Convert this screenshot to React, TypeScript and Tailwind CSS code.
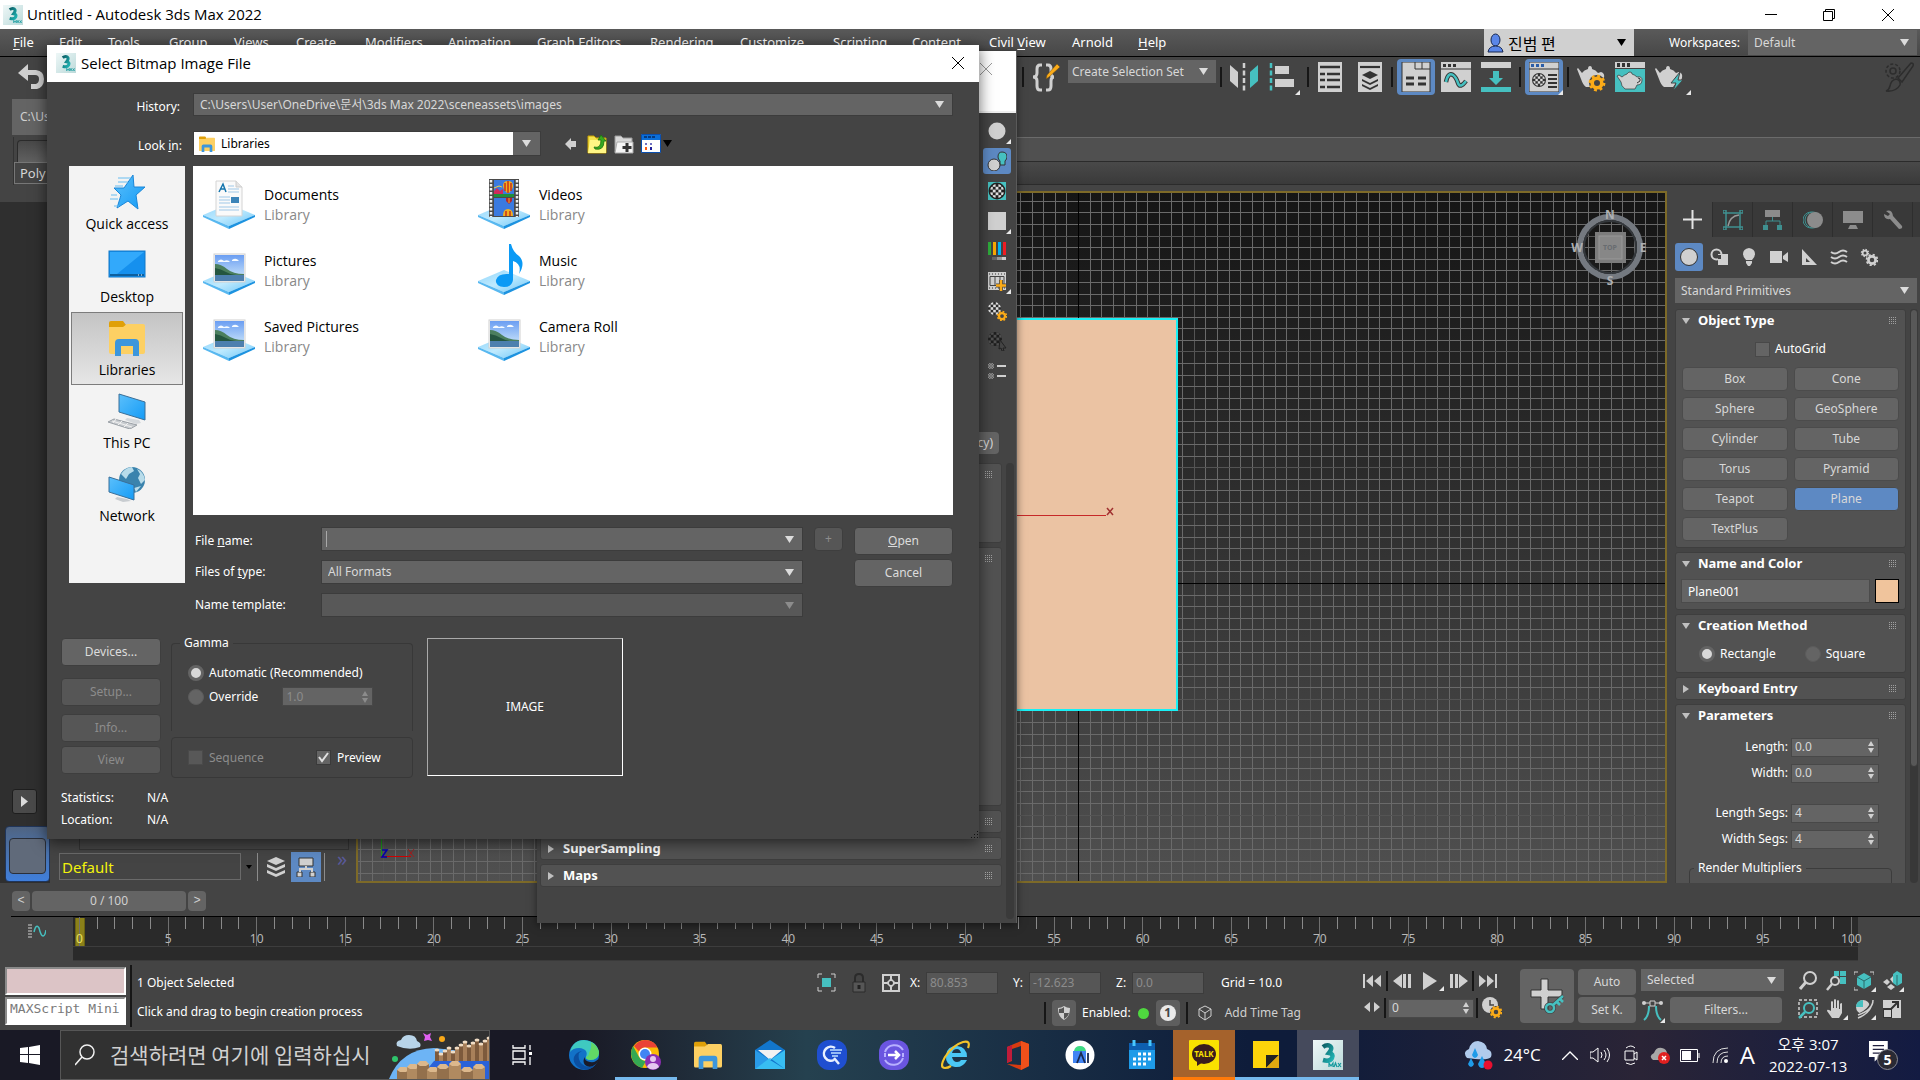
import React, { useId, useState } from 'react';

const TEAL = '#46c0c0';
const ICON = '#d0d0d0';

/* ---------- small shared controls ---------- */

interface SelectProps {
  id?: string;
  label: string;
  value: string;
  className: string;
  caret?: string;
  text?: string;
}

function Caret({ className = 'text-[#dcdcdc]' }: { className?: string }) {
  return (
    <svg viewBox="0 0 9 7" className={`w-[9px] h-[7px] pointer-events-none ${className}`}>
      <path d="M0 0h9L4.5 7z" fill="currentColor" />
    </svg>
  );
}

function Select({ id, label, value, className, caret, text = 'text-xs text-[#d8d8d8] pl-1.5' }: SelectProps) {
  return (
    <div className={`relative flex items-center ${className}`}>
      <select id={id} aria-label={label} className={`appearance-none w-full h-full bg-transparent outline-none ${text}`}>
        <option>{value}</option>
      </select>
      <div className="absolute right-2 pointer-events-none">
        <Caret className={caret} />
      </div>
    </div>
  );
}

interface SpinProps {
  id: string;
  value: string;
  className?: string;
  dim?: boolean;
}

function Spin({ id, value, className = 'w-[88px]', dim }: SpinProps) {
  return (
    <div className={`flex items-center h-[19px] bg-[#646464] border border-[#484848] pl-[3px] pr-1 ${className}`}>
      <input
        id={id}
        aria-label={id}
        defaultValue={value}
        disabled={dim}
        className={`min-w-0 flex-1 bg-transparent text-xs outline-none ${dim ? 'text-[#8c8c8c]' : 'text-[#d8d8d8]'}`}
      />
      <svg viewBox="0 0 6 12" className={`w-1.5 h-3 shrink-0 ${dim ? 'text-[#8c8c8c]' : 'text-[#d0d0d0]'}`}>
        <path d="M0 5L3 0l3 5zM0 7l3 5 3-5z" fill="currentColor" />
      </svg>
    </div>
  );
}

function Radio({ name, id, checked, label }: { name: string; id: string; checked?: boolean; label: string }) {
  return (
    <label htmlFor={id} className="flex items-center gap-[5px] text-xs text-white">
      <input
        type="radio"
        id={id}
        name={name}
        defaultChecked={checked}
        className="appearance-none size-4 rounded-full bg-[#646464] border-[#5c5c5c] border checked:border-[3px] checked:border-[#646464] checked:bg-[#d8d8d8]"
      />
      {label}
    </label>
  );
}

function Grip({ className = '' }: { className?: string }) {
  return (
    <svg viewBox="0 0 8 8" className={`size-2 ${className}`}>
      {[0, 2, 4, 6].map((y) =>
        [0, 2, 4, 6].map((x) => <rect key={`${x}-${y}`} x={x} y={y} width="1" height="1" fill="#a0a0a0" />)
      )}
    </svg>
  );
}

function DotBar({ className }: { className: string }) {
  return <div className={`bg-[radial-gradient(#a8a8a8_40%,transparent_45%)] bg-[length:2px_2px] opacity-70 ${className}`} />;
}

function Corner() {
  return (
    <svg viewBox="0 0 5 5" className="absolute right-0 bottom-0 size-[5px]">
      <path d="M5 0v5H0z" fill="#e8e8e8" />
    </svg>
  );
}

/* ---------- icons ---------- */

function MaxIcon({ className }: { className: string }) {
  return (
    <svg viewBox="0 0 30 30" className={className}>
      <defs>
        <linearGradient id="maxbg" x1="0" y1="0" x2="1" y2="1">
          <stop offset="0" stopColor="#eef7f7" />
          <stop offset="1" stopColor="#bcdada" />
        </linearGradient>
        <linearGradient id="maxfg" x1="0" y1="0" x2="1" y2="1">
          <stop offset="0" stopColor="#0b5f66" />
          <stop offset="1" stopColor="#21b5b5" />
        </linearGradient>
      </defs>
      <rect width="30" height="30" fill="url(#maxbg)" />
      <path d="M10 7q4-3 7-1t-1 7q5 1 3 5t-9 2" fill="none" stroke="url(#maxfg)" strokeWidth="4.5" />
      <path d="M16 27v-4l2 3 2-3v4m1 0l1.500-4 1.500 4m1 0l3-4m-3 0l3 4" fill="none" stroke="#159a9e" strokeWidth="1.200" />
    </svg>
  );
}

function LibraryFolder({ className }: { className: string }) {
  return (
    <svg viewBox="0 0 36 36" className={className}>
      <path d="M0 3q0-2 2-2h12l3 4-2 3H0z" fill="#e0a008" />
      <path d="M0 7h14l4-3h16q2 0 2 2v26q0 2-2 2H2q-2 0-2-2z" fill="#fdd063" />
      <path d="M6 36V23q0-4 4-4h16q4 0 4 4v13h-6V26H12v10z" fill="#3c96dc" />
    </svg>
  );
}

function PlateIcon({ kind }: { kind: string }) {
  return (
    <svg viewBox="0 2 54 54" className="w-[54px] h-[54px] shrink-0">
      <defs>
        <linearGradient id="plate" x1="0" y1="0" x2="1" y2="1">
          <stop offset="0" stopColor="#8fd5fb" />
          <stop offset=".5" stopColor="#bfeafe" />
          <stop offset="1" stopColor="#6cc6f8" />
        </linearGradient>
        <linearGradient id="sky" x1="0" y1="0" x2="0" y2="1">
          <stop offset="0" stopColor="#6b9ef2" />
          <stop offset="1" stopColor="#d4ecfb" />
        </linearGradient>
      </defs>
      <path d="M1 39L27 28l26 11-26 11z" fill="url(#plate)" />
      <path d="M1 39l26 11v3L1 41z" fill="#58b8f0" />
      <path d="M53 39L27 50v3l26-12z" fill="#1d93e0" />
      {kind === 'doc' && (
        <g>
          <path d="M14 5h20l6 6v29H14z" fill="#fafafa" stroke="#d4d4d4" />
          <path d="M34 5v6h6" fill="#e4e4e4" stroke="#ccc" />
          <path d="M17 16l4-8 3 8m-5-3h4" fill="none" stroke="#1475ad" strokeWidth="1.500" />
          <path d="M26 10h6M26 13h11M26 16h11M17 21h11M17 24h11M17 27h11M17 31h20M17 34h20" stroke="#9fc8e8" />
          <rect x="29" y="21" width="8" height="6" fill="#3c84b8" />
        </g>
      )}
      {kind === 'pic' && (
        <g>
          <rect x="12" y="12" width="31" height="28" fill="#fafafa" stroke="#cfcfcf" />
          <rect x="13" y="13" width="29" height="26" fill="url(#sky)" />
          <path d="M16 19q3-3 6 0 4-2 6 1h-12zM30 18q4-3 7 1h-7z" fill="#f4faff" />
          <path d="M13 22q6 0 12 5t17 5v2H13z" fill="#4b7f5e" />
          <path d="M13 26q6 1 11 4t10 3H13z" fill="#24553f" />
          <rect x="13" y="33" width="29" height="6" fill="#4d7fae" />
        </g>
      )}
      {kind === 'video' && (
        <g>
          <rect x="12" y="3" width="30" height="38" fill="#4a4a4a" />
          <path d="M14 4v37M40 4v37" stroke="#f0f0f0" strokeWidth="2.500" strokeDasharray="2.500 1.500" />
          <rect x="17" y="4" width="20" height="17" fill="#3a7ae0" />
          <rect x="17" y="22" width="20" height="18" fill="#3a7ae0" />
          <path d="M17 15l3-3 3 3 3-2v6h-9z" fill="#d02a5c" />
          <path d="M17 12l5-2 3 1" fill="none" stroke="#f0d040" />
          <path d="M17 18h20v3H17z" fill="#1f8f3a" />
          <path d="M26 10q0-5 5-5t5 5q0 3-4 7h-2q-4-4-4-7z" fill="#f0b020" />
          <path d="M31 5v12M28 7v8M34 7v8" stroke="#c8301a" strokeWidth="1.500" />
          <path d="M29 22h6v3l-3 3-3-3z" fill="#b02a30" />
          <path d="M32 22v5" stroke="#f0b020" />
          <path d="M26 40q0-7 5-7t5 7z" fill="#f0b020" />
          <path d="M29 35v5M33 35v5" stroke="#c8301a" strokeWidth="1.500" />
        </g>
      )}
      {kind === 'music' && (
        <path d="M32 2h2q2 8 8 12 7 7 0 18 3-10-6-13v19q-1 7-9 7-9-1-8-7 2-7 13-6z" fill="#0b9af5" />
      )}
    </svg>
  );
}

function PlaceIcon({ kind }: { kind: string }) {
  if (kind === 'lib') return <LibraryFolder className="size-9" />;
  return (
    <svg viewBox="0 0 40 36" className="w-10 h-9">
      <defs>
        <linearGradient id="screen" x1="0" y1="0" x2="1" y2="1">
          <stop offset="0" stopColor="#5cc0fb" />
          <stop offset="1" stopColor="#149bf6" />
        </linearGradient>
      </defs>
      {kind === 'star' && (
        <g>
          <path d="M26 1l1 12h11l-9 8 2 14-10-8-11 7 4-13-7-7h10z" fill="url(#screen)" stroke="#1a86d8" />
          <path d="M11 4h13M11 8h10M8 12h8M4 21h6M3 25h8M7 32h5" stroke="#68bdf0" />
        </g>
      )}
      {kind === 'desktop' && (
        <g>
          <rect x="2" y="4" width="36" height="26" fill="#1590ee" stroke="#1278c8" />
          <path d="M3 5h34L10 27H3z" fill="#32a9fb" />
          <path d="M3 28h34" stroke="#0d5f9e" strokeWidth="2" />
          <path d="M31 28h1M34 28h1" stroke="#fff" strokeWidth="1" />
        </g>
      )}
      {kind === 'pc' && (
        <g>
          <path d="M12 1l26 8v18l-26-8z" fill="url(#screen)" stroke="#3b6f98" />
          <path d="M20 25l12 2 2 3-5 1-11-4z" fill="#d4d8dc" />
          <path d="M7 26l23 6-7 4-22-7z" fill="#c8ccd0" stroke="#9aa0a6" />
          <path d="M5 28l20 6M9 26l-3 4M15 28l-4 4M21 30l-4 4" stroke="#f0f0f0" />
        </g>
      )}
      {kind === 'net' && (
        <g>
          <circle cx="25" cy="14" r="13" fill="#3a83ad" />
          <path d="M14 8q5-7 11-7l2 4-5 3-3 5zM30 3q7 3 8 11l-4 4-3-6 2-4zM27 22l7-2-5 6z" fill="#b8dcea" />
          <path d="M2 11l25 8v15L2 26z" fill="url(#screen)" stroke="#3b6f98" />
          <path d="M10 31l10 2 4 2-8 1-8-3z" fill="#c8ccd0" />
        </g>
      )}
    </svg>
  );
}

const teapot = 'M6 11q2-3 6-4 0-3 2-3t2 3q4 1 6 4l3-1q4 1 3 6-1 4-6 5l-3 4H10q-3-2-5-8L1 7l1-1z';

function Checker({ x, y, s, a, b }: { x: number; y: number; s: number; a: string; b: string }) {
  const clip = useId();
  const u = s / 5;
  return (
    <g>
      <clipPath id={clip}>
        <circle cx={x + s / 2} cy={y + s / 2} r={s / 2} />
      </clipPath>
      <g clipPath={`url(#${clip})`}>
        <rect x={x} y={y} width={s} height={s} fill={a} />
        {[0, 1, 2, 3, 4].map((r) =>
          [0, 1, 2, 3, 4]
            .filter((c) => (r + c) % 2 === 1)
            .map((c) => <rect key={`${r}${c}`} x={x + c * u} y={y + r * u} width={u} height={u} fill={b} />)
        )}
      </g>
    </g>
  );
}

function Gear({ x, y, r, fill }: { x: number; y: number; r: number; fill: string }) {
  return (
    <g>
      <circle cx={x} cy={y} r={r * 0.6} fill="none" stroke={fill} strokeWidth={r * 0.45} />
      <circle cx={x} cy={y} r={r * 0.9} fill="none" stroke={fill} strokeWidth={r * 0.3} strokeDasharray={`${r * 0.36} ${r * 0.347}`} />
    </g>
  );
}

function ToolIcon({ kind }: { kind: string }) {
  return (
    <svg viewBox="0 0 30 30" className="size-[30px]">
      {kind === 'named' && (
        <g>
          <path d="M11 3H9Q6 3 6 7v4q0 4-4 4 4 0 4 4v5q0 4 3 4h2M15 3h2q3 0 3 4v4q0 4 3 4-3 0-3 4v5q0 4-3 4h-2" fill="none" stroke={ICON} strokeWidth="3" />
          <path d="M15 17l1-4L26 2l3 3-11 10z" fill="#fbab18" stroke="#6a4a10" strokeWidth=".5" />
        </g>
      )}
      {kind === 'mirror' && (
        <g>
          <path d="M1 3l8 7v16l-8-7z" fill={ICON} />
          <path d="M29 3l-8 7v16l8-7z" fill={TEAL} />
          <path d="M15 1v28" stroke={ICON} strokeWidth="2.500" strokeDasharray="5 2.500" />
        </g>
      )}
      {kind === 'align' && (
        <g>
          <path d="M3 1v28" stroke={TEAL} strokeWidth="2.500" strokeDasharray="5 2.500" />
          <path d="M7 4h14v8H7zM7 17h19v8H7z" fill={ICON} />
        </g>
      )}
      {kind === 'list' && (
        <g>
          <path d="M3 0h24v30H3z" fill={ICON} />
          <path d="M5 5h20M5 12h5M5 18h5M5 25h5M12 12h13M12 18h13M12 25h13" stroke="#333" strokeWidth="2.500" />
        </g>
      )}
      {kind === 'layers' && (
        <g>
          <path d="M3 0h24v30H3z" fill={ICON} />
          <path d="M5 5h20" stroke="#333" strokeWidth="2.200" />
          <path d="M15 9l8 4-8 4-8-4zM7 17l8 4 8-4v2l-8 4-8-4zM7 22l8 4 8-4v2l-8 4-8-4z" fill="#333" />
        </g>
      )}
      {kind === 'ribbon' && (
        <g>
          <path d="M1 0h28v30H1z" fill={ICON} stroke="#333" />
          <path d="M14 0v7h15M21 0v7" fill="none" stroke="#333" />
          <path d="M5 16h8M17 16h8M5 22h8M17 22h8" stroke="#333" strokeWidth="3" />
        </g>
      )}
      {kind === 'curve' && (
        <g>
          <path d="M0 0h30v30H0z" fill={ICON} />
          <path d="M0 7h30" stroke="#333" />
          <path d="M2 2h3v3H2zM7 2h3v3H7zM12 2h3v3h-3z" fill="#333" />
          <path d="M5 20q2-10 7-7 3 2 5 8t8-2" fill="none" stroke="#333" strokeWidth="4.500" />
          <path d="M5 20q2-10 7-7 3 2 5 8t8-2" fill="none" stroke={TEAL} strokeWidth="2.500" />
        </g>
      )}
      {kind === 'schematic' && (
        <g>
          <path d="M0 0h30v6H0z" fill={ICON} />
          <path d="M12 9h6v7h4l-7 7-7-7h4zM0 25h30v5H0z" fill={TEAL} />
        </g>
      )}
      {kind === 'material' && (
        <g>
          <path d="M0 0h30v30H0z" fill={ICON} stroke="#333" />
          <path d="M0 7h30" stroke="#333" />
          <path d="M2 2h3v3H2zM7 2h3v3H7zM12 2h3v3h-3z" fill="#2c5ea8" />
          <circle cx="10" cy="18" r="7" fill="#333" />
          <Checker x={4} y={12} s={12} a="#333" b="#ddd" />
          <path d="M19 13h9M19 17h9M19 21h9M19 25h9" stroke="#333" strokeWidth="2" />
        </g>
      )}
      {kind === 'teagear' && (
        <g>
          <path d={teapot} fill={ICON} />
          <circle cx="21" cy="21" r="8" fill="#444" />
          <Gear x={21} y={21} r={8} fill="#fbab18" />
        </g>
      )}
      {kind === 'teaframe' && (
        <g>
          <path d="M0 0h30v6H0z" fill={ICON} />
          <path d="M2 1h3v4H2zM7 1h3v4H7zM12 1h3v4h-3z" fill="#333" />
          <path d="M0 7h30v23H0z" fill={TEAL} />
          <path d="M7 15q2-2 5-3 1-2 3-2t2 2q3 1 5 3 5-1 5 3 0 5-5 5l-2 4H10q-4-3-4-7l-4-6 2-1z" fill={ICON} stroke="#333" strokeWidth=".7" />
          <path d="M23 16q3 0 2 3l-3 2" fill="none" stroke="#333" />
        </g>
      )}
      {kind === 'teabolt' && (
        <g>
          <path d={teapot} fill={ICON} />
          <path d="M26 10l-9 11h5l-3 8 10-11h-5z" fill={TEAL} stroke="#444" />
        </g>
      )}
      {kind === 'paint' && (
        <g fill="#444" stroke="#2d2d2d" strokeWidth="1.500">
          <path d="M27 1q3 0 2 3L18 20l-4-4z" />
          <path d="M12 17q5 1 4 6-4 7-14 6 3-1 4-5 1-6 6-7z" />
          <circle cx="9" cy="9" r="7" strokeDasharray="3 2" />
          <circle cx="9" cy="9" r="3" />
        </g>
      )}
    </svg>
  );
}

/* ---------- top of the main window ---------- */

function TitleBar() {
  return (
    <header className="flex items-center h-[29px] shrink-0 bg-white text-black pl-[3px]">
      <MaxIcon className="size-5" />
      <h1 className="ml-1 text-[15px] font-['Open_Sans',sans-serif]">Untitled - Autodesk 3ds Max 2022</h1>
      <div className="ml-auto flex items-center pr-[2px]">
        <button aria-label="Minimize" className="w-[58px] h-[29px] grid place-items-center">
          <svg viewBox="0 0 12 12" className="size-3"><path d="M0 5.500h12" stroke="#000" /></svg>
        </button>
        <button aria-label="Restore" className="w-[58px] h-[29px] grid place-items-center">
          <svg viewBox="0 0 12 12" className="size-3"><path d="M.5 2.500h9v9h-9zM2.500 2.500v-2h9v9h-2" fill="none" stroke="#000" /></svg>
        </button>
        <button aria-label="Close" className="w-[60px] h-[29px] grid place-items-center">
          <svg viewBox="0 0 12 12" className="size-3"><path d="M0 0l12 12M12 0L0 12" stroke="#000" /></svg>
        </button>
      </div>
    </header>
  );
}

const menus = [
  ['F', 'ile', 'w-[46px]'],
  ['E', 'dit', 'w-[49px]'],
  ['T', 'ools', 'w-[61px]'],
  ['G', 'roup', 'w-[65px]'],
  ['V', 'iews', 'w-[62px]'],
  ['C', 'reate', 'w-[69px]'],
  ['M', 'odifiers', 'w-[83px]'],
  ['A', 'nimation', 'w-[89px]'],
  ['G', 'raph Editors', 'w-[113px]'],
  ['R', 'endering', 'w-[90px]'],
  ['C', 'ustomize', 'w-[93px]'],
  ['S', 'cripting', 'w-[79px]'],
  ['C', 'ontent', 'w-[77px]'],
];

function MenuBar() {
  return (
    <nav className="flex items-center h-7 shrink-0 bg-linear-to-b from-[#5a5a5a] to-[#474747] border-b border-black text-[13px] text-white pl-[13px]">
      {menus.map(([key, rest, width], i) => (
        <button key={i} className={`text-left whitespace-nowrap shrink-0 ${width}`}>
          <u className="underline-offset-2">{key}</u>
          {rest}
        </button>
      ))}
      <button className="text-left w-[83px] shrink-0">Civil <u className="underline-offset-2">V</u>iew</button>
      <button className="text-left w-[66px] shrink-0">Arnold</button>
      <button className="text-left shrink-0"><u className="underline-offset-2">H</u>elp</button>
      <div className="ml-auto flex items-center h-full shrink-0">
        <div className="flex items-center w-[150px] h-full bg-[#d0d0d0] pl-[3px]">
          <svg viewBox="0 0 17 20" className="w-[17px] h-5">
            <ellipse cx="8.500" cy="7" rx="4.500" ry="6" fill="#5a86e8" stroke="#16264e" />
            <path d="M1 19q1-6 7.500-6t7.500 6z" fill="#5a86e8" stroke="#16264e" />
          </svg>
          <Select
            label="Account"
            value="진범 편"
            className="flex-1 h-full"
            caret="text-black"
            text="text-base text-black pl-1 font-['Noto_Sans_CJK_KR',sans-serif]"
          />
        </div>
        <label htmlFor="workspace" className="ml-[35px] w-[79px] text-xs">Workspaces:</label>
        <Select id="workspace" label="Workspaces" value="Default" className="w-[169px] mr-[3px] h-[25px] bg-[#646464]" />
      </div>
    </nav>
  );
}

function Sep({ className = 'h-5' }: { className?: string }) {
  return <span className={`w-[2px] shrink-0 bg-[#161616] ${className}`} />;
}

function ToolButton({ kind, active, corner, className = 'w-[38px]' }: { kind: string; active?: boolean; corner?: boolean; className?: string }) {
  return (
    <button
      aria-label={kind}
      className={`relative h-9 shrink-0 grid place-items-center rounded ${className} ${active ? 'bg-[#5d89c3]' : ''}`}
    >
      <ToolIcon kind={kind} />
      {corner && <Corner />}
    </button>
  );
}

function MainToolbar() {
  return (
    <div className="flex items-start h-10 shrink-0 pt-[2px] pl-[3px]">
      <div className="flex items-center h-9 w-[1019px] shrink-0">
        <DotBar className="w-[3px] h-8" />
        <button aria-label="Undo" className="ml-[10px]">
          <svg viewBox="0 0 30 28" className="w-[30px] h-7">
            <path d="M2 10L12 1v6h8q8 1 8 9t-7 10h-6v-5h5q3-1 3-5t-4-4h-7v6z" fill={ICON} />
          </svg>
        </button>
      </div>
      <div className="flex items-center h-9 shrink-0">
        <Sep />
        <ToolButton kind="named" className="w-11" />
        <Select label="Named selection set" value="Create Selection Set" className="w-[148px] h-[23px] bg-[#646464] self-start mt-px" text="text-xs text-[#d8d8d8] pl-1" />
        <span className="w-1" />
        <Sep />
        <ToolButton kind="mirror" className="w-11" />
        <ToolButton kind="align" corner className="w-[34px]" />
        <span className="w-[7px]" />
        <Sep />
        <ToolButton kind="list" className="w-[42px]" />
        <ToolButton kind="layers" className="w-[38px]" />
        <span className="w-[2px]" />
        <Sep />
        <span className="w-1" />
        <ToolButton kind="ribbon" active />
        <ToolButton kind="curve" className="w-[42px]" />
        <ToolButton kind="schematic" />
        <span className="w-1" />
        <Sep />
        <span className="w-1" />
        <ToolButton kind="material" active corner />
        <span className="w-1" />
        <Sep />
        <ToolButton kind="teagear" className="w-11" />
        <ToolButton kind="teaframe" className="w-[34px]" />
        <ToolButton kind="teabolt" corner className="w-11" />
      </div>
      <div className="ml-auto flex items-center h-9 pr-[6px]">
        <DotBar className="w-[3px] h-8 mr-[9px]" />
        <ToolIcon kind="paint" />
      </div>
    </div>
  );
}

function RibbonRows() {
  return (
    <div className="shrink-0">
      <div className="flex items-center h-10 pl-[3px] gap-[6px]">
        <DotBar className="w-[3px] h-9" />
        <div className="flex items-center h-9 w-10 overflow-hidden bg-[#646464] pl-2 text-xs text-[#d0d0d0]">C:\Us</div>
      </div>
      <div className="flex">
        <div className="flex items-center w-[58px] pl-[3px] gap-[7px]">
          <DotBar className="w-[3px] h-11" />
          <div className="flex flex-col h-12 flex-1 border-l border-[#333]">
            <div className="h-[22px] ml-[3px] mt-[3px] rounded-tl bg-linear-to-b from-[#484848] to-[#606060] border border-[#2b2b2b] border-b-0" />
            <div className="flex-1 mb-px border border-[#777] border-r-0 pl-[5px] text-[13px] leading-5 text-[#d8d8d8]">Poly</div>
          </div>
        </div>
        <div className="flex-1">
          <div className="h-6 bg-[#505050] border-t border-[#6b6b6b]" />
          <div className="h-6 bg-linear-to-b from-[#494949] to-[#3a3a3a] border-y border-[#2b2b2b]" />
        </div>
      </div>
    </div>
  );
}

/* ---------- left side ---------- */

function LeftStrip() {
  return (
    <div className="flex flex-col w-[50px] shrink-0">
      <DotBar className="h-[3px] mt-[7px] ml-[3px]" />
      <div className="flex-1 flex flex-col mt-[7px] bg-[#2f2f2f]">
        <button aria-label="Expand layouts" className="mt-auto ml-3 grid place-items-center w-[25px] h-[25px] rounded-[3px] border border-[#1e1e1e] bg-[#4a4a4a]">
          <svg viewBox="0 0 7 11" className="w-[7px] h-[11px]"><path d="M0 0l7 5.500L0 11z" fill="#dcdcdc" /></svg>
        </button>
        <button aria-label="Viewport layout" className="mt-3 mb-px ml-[5px] h-[56px] rounded bg-linear-to-b from-[#4f6482] to-[#3f7fdc] border border-[#20355a] p-[3px]">
          <span className="block mt-[4px] h-[36px] rounded-sm border border-[#2a2f3a] bg-[#606a7a]" />
        </button>
      </div>
    </div>
  );
}

function SceneExplorer() {
  return (
    <div className="flex flex-col justify-end w-[306px] shrink-0 pl-[9px]">
      <div className="flex-1 ml-5 mr-[7px] border border-[#333]" />
      <div className="flex items-center h-[33px]">
        <input aria-label="Layer" defaultValue="Default" className="w-[182px] h-[27px] bg-[#444] border border-[#6a6a6a] px-[2px] text-[15px] text-[#f2f20c] outline-none" />
        <svg viewBox="0 0 6 4" className="ml-[5px] w-1.5 h-1"><path d="M0 0h6L3 4z" fill="#000" /></svg>
        <span className="ml-[5px] w-px h-7 bg-[#8c8c8c]" />
        <button aria-label="Layers" className="ml-[9px]">
          <svg viewBox="0 0 18 20" className="w-[18px] h-5">
            <path d="M9 0l9 4-9 4-9-4zM0 7l9 4 9-4v3l-9 4-9-4zM0 13l9 4 9-4v3l-9 4-9-4z" fill={ICON} />
          </svg>
        </button>
        <button aria-label="Hierarchy" className="ml-[6px] grid place-items-center w-[30px] h-[30px] bg-[#5d89c3]">
          <svg viewBox="0 0 20 20" className="size-5">
            <path d="M3 1h14v8H3zM1 15h5v5H1zM14 15h5v5h-5z" fill={ICON} stroke="#333" />
            <path d="M10 9v3M4 15v-3h12v3" fill="none" stroke={ICON} strokeWidth="2" />
          </svg>
        </button>
        <span className="ml-[3px] w-px h-7 bg-[#8c8c8c]" />
        <span className="ml-3 mb-4 text-xl leading-4 text-[#5a5a9a]">»</span>
      </div>
    </div>
  );
}

/* ---------- viewport ---------- */

const gridX = Array.from({ length: 113 }, (_, i) => Math.round(1078 + (i - 62) * 11.58));
const gridY = Array.from({ length: 60 }, (_, i) => Math.round(583 + (i - 33) * 11.58));

function Viewport() {
  return (
    <main className="flex-1 min-w-0 min-h-0 mt-[6px] border-2 border-[#7d6a28] bg-linear-to-b from-[#151515] to-[#505050]">
      <svg viewBox="358 193 1307 688" preserveAspectRatio="xMidYMid slice" className="block w-full h-full">
        <g shapeRendering="crispEdges">
          {gridX.map((x, i) => (
            <rect key={x} x={x} y="192" width="1" height="689" fill={(i - 62) % 10 === 0 ? '#545454' : '#6a6a6a'} />
          ))}
          {gridY.map((y, i) => (
            <rect key={y} x="358" y={y} width="1307" height="1" fill={(i - 33) % 10 === 0 ? '#545454' : '#6a6a6a'} />
          ))}
          <rect x="1078" y="192" width="1" height="689" fill="#000" />
          <rect x="358" y="583" width="1307" height="1" fill="#000" />
          <rect x="900" y="319" width="277" height="391" fill="#ebc3a3" stroke="#19f0f5" strokeWidth="2" />
          <rect x="1000" y="515" width="106" height="1" fill="#c62828" />
          <rect x="381" y="830" width="1" height="27" fill="#1a9a1a" />
          <rect x="381" y="856" width="30" height="1" fill="#d00000" />
        </g>
        <path d="M1107 508l6 7M1113 508l-6 7" stroke="#a03030" strokeWidth="1.500" />
        <path d="M408 849l6 8M414 849l-6 8" stroke="#a02020" />
        <path d="M382 850h5l-5 7h5" fill="none" stroke="#0000b0" strokeWidth="1.500" />
        <circle cx="1610" cy="247" r="30" fill="none" stroke="#747980" strokeWidth="6" />
        <circle cx="1610" cy="247" r="26" fill="none" stroke="#33373b" strokeWidth="2" />
        <rect x="1595" y="232" width="31" height="31" fill="#7c7c7c" />
        <rect x="1599" y="236" width="23" height="23" fill="#878787" stroke="#989898" />
        <g fill="#aeb0b2" fontSize="12" fontWeight="700" textAnchor="middle">
          <text x="1610" y="219">N</text>
          <text x="1610" y="285">S</text>
          <text x="1577" y="252">W</text>
          <text x="1643" y="252">E</text>
          <text x="1610" y="250" fontSize="7" fill="#686c70">TOP</text>
        </g>
      </svg>
    </main>
  );
}

/* ---------- command panel ---------- */

function CommandTabs() {
  const tabs = [
    <path key="0" d="M8.500 0h2v8.500H19v2h-8.500V19h-2v-8.500H0v-2h8.500z" fill="#e4e4e4" />,
    <g key="1" fill="none" stroke="#3f9090" strokeWidth="1.500">
      <path d="M3 3h14v14H3z" />
      <path d="M0 0h3v3H0zM17 0h3v3h-3zM0 17h3v3H0zM17 17h3v3h-3z" fill="#393939" />
      <path d="M5 16Q7 6 16 5" stroke="#9a9a9a" />
    </g>,
    <g key="2">
      <path d="M2 0h15v7H2z" fill="#8c8c8c" />
      <path d="M9.500 7v4M3 16v-5h14v5" fill="none" stroke="#3f9090" />
      <path d="M0 15h5v5H0zM14 15h5v5h-5z" fill="#3f9090" />
    </g>,
    <g key="3">
      <circle cx="8" cy="10" r="8" fill="none" stroke="#3f9090" />
      <circle cx="10" cy="10" r="8" fill="#393939" stroke="#3f9090" />
      <circle cx="12" cy="10" r="8" fill="#8c8c8c" />
    </g>,
    <path key="4" d="M0 1h20v12H0zM7 15h6l2 4H5z" fill="#8c8c8c" />,
    <path key="5" d="M3 1q6-2 7 5l9 10q1 3-3 3L7 9Q1 10 1 4l4 2 2-2z" fill="#8c8c8c" />,
  ];
  return (
    <div className="flex h-[35px] mt-[7px] bg-[#393939]">
      {tabs.map((t, i) => (
        <button key={i} aria-label={`Panel ${i + 1}`} className={`w-10 grid place-items-center border-r border-[#2e2e2e] ${i === 0 ? 'bg-[#444]' : ''}`}>
          <svg viewBox="0 0 20 20" className="size-5">{t}</svg>
        </button>
      ))}
    </div>
  );
}

function CategoryRow() {
  const items = [
    <circle key="0" cx="9" cy="9" r="8.500" fill={ICON} stroke="#333" />,
    <g key="1">
      <path d="M8 6h10v11H8z" fill={ICON} />
      <circle cx="6.500" cy="6.500" r="5" fill="none" stroke={ICON} strokeWidth="2" />
      <path d="M8 7h3v4H8z" fill="#444" />
    </g>,
    <path key="2" d="M9 0q6 1 6 6 0 3-3 6H6Q3 9 3 6q0-5 6-6zM6 13h6v2l-2 3H8l-2-3z" fill={ICON} />,
    <path key="3" d="M0 3h12v12H0zM13 8l5-4v10l-5-3z" fill={ICON} />,
    <path key="4" d="M2 1l15 16H2zM6 10v4h4z" fill={ICON} fillRule="evenodd" />,
    <path key="5" d="M1 4q4 3 8 0t8 0M1 9q4 3 8 0t8 0M1 14q4 3 8 0t8 0" fill="none" stroke={ICON} strokeWidth="2" />,
    <g key="6"><Gear x={5} y={5} r={4} fill={ICON} /><Gear x={12} y={12} r={6} fill={ICON} /></g>,
  ];
  return (
    <div className="flex gap-[2px] mt-[6px] ml-[2px]">
      {items.map((t, i) => (
        <button key={i} aria-label={`Category ${i + 1}`} className={`size-7 grid place-items-center rounded-[3px] ${i === 0 ? 'bg-[#5d89c3]' : ''}`}>
          <svg viewBox="0 0 18 18" className="size-[18px]">{t}</svg>
        </button>
      ))}
    </div>
  );
}

interface RolloutProps {
  title: string;
  closed?: boolean;
  className?: string;
  children?: React.ReactNode;
}

function Rollout({ title, closed, className = '', children }: RolloutProps) {
  return (
    <section className={`rounded-[3px] border border-[#3e3e3e] bg-[#525252] ${className}`}>
      <h2 className="flex items-center h-[21px] pl-[6px] pr-2 text-[13px] font-bold text-white">
        <svg viewBox="0 0 8 8" className="size-2 mr-2">
          <path d={closed ? 'M1 0l6 4-6 4z' : 'M0 1h8L4 7z'} fill="#c0c0c0" />
        </svg>
        {title}
        <Grip className="ml-auto" />
      </h2>
      {children}
    </section>
  );
}

const primitives = ['Box', 'Cone', 'Sphere', 'GeoSphere', 'Cylinder', 'Tube', 'Torus', 'Pyramid', 'Teapot', 'Plane', 'TextPlus'];

function ParamRow({ label, value, className = '' }: { label: string; value: string; className?: string }) {
  return (
    <div className={`flex items-center justify-end gap-[3px] h-[26px] pr-[26px] text-xs text-white ${className}`}>
      <label htmlFor={label}>{label}:</label>
      <Spin id={label} value={value} />
    </div>
  );
}

function CommandPanel() {
  const [active, setActive] = useState('Plane');
  return (
    <aside className="flex flex-col w-[253px] shrink-0 pl-[6px] pt-[7px]">
      <DotBar className="h-[3px] mr-[3px]" />
      <CommandTabs />
      <CategoryRow />
      <Select label="Primitive type" value="Standard Primitives" className="shrink-0 mt-[7px] ml-[2px] mr-[3px] h-[25px] bg-[#646464]" />
      <div className="flex flex-1 min-h-0 mt-[6px] ml-[2px] mr-[2px] gap-1">
        <div className="flex-1 flex flex-col gap-1 overflow-hidden">
          <Rollout title="Object Type" className="pb-[6px]">
            <label className="flex items-center justify-center gap-[5px] h-9 text-xs text-white">
              <input type="checkbox" className="appearance-none size-[15px] bg-[#646464] border border-[#484848]" />
              AutoGrid
            </label>
            <div className="grid grid-cols-2 gap-x-[6px] gap-y-[6px] px-[6px]">
              {primitives.map((p) => (
                <button
                  key={p}
                  onClick={() => setActive(p)}
                  className={`h-6 rounded text-xs text-[#d8d8d8] border border-[#4b4b4b] ${p === active ? 'bg-[#5d89c3]' : 'bg-[#646464]'}`}
                >
                  {p}
                </button>
              ))}
            </div>
          </Rollout>
          <Rollout title="Name and Color" className="pb-[6px]">
            <div className="flex items-center gap-[5px] mt-[5px] pl-[5px] pr-[6px]">
              <input aria-label="Object name" defaultValue="Plane001" className="flex-1 min-w-0 h-6 px-[6px] bg-[#646464] border border-[#4b4b4b] text-xs text-white outline-none" />
              <button aria-label="Object color" className="size-6 border border-black bg-[#f0c49c]" />
            </div>
          </Rollout>
          <Rollout title="Creation Method" className="pb-2">
            <div className="flex gap-[29px] pl-[23px] pt-[10px] pb-[2px]">
              <Radio name="method" id="rectangle" checked label="Rectangle" />
              <Radio name="method" id="square" label="Square" />
            </div>
          </Rollout>
          <Rollout title="Keyboard Entry" closed />
          <Rollout title="Parameters" className="shrink-0">
            <div className="pt-[8px]">
              <ParamRow label="Length" value="0.0" />
              <ParamRow label="Width" value="0.0" />
              <ParamRow label="Length Segs" value="4" className="mt-[14px]" />
              <ParamRow label="Width Segs" value="4" />
            </div>
            <fieldset className="mt-2 mx-[13px] h-10 rounded border border-[#3c3c3c] pl-1 text-xs text-white">
              <legend className="px-1">Render Multipliers</legend>
            </fieldset>
          </Rollout>
        </div>
        <div className="w-2 rounded-full bg-[#383838]">
          <div className="h-[458px] rounded-full border border-[#3a3a3a] bg-[#585858]" />
        </div>
      </div>
    </aside>
  );
}

/* ---------- timeline and status ---------- */

function TimeSlider() {
  return (
    <div className="flex h-[78px] shrink-0">
      <DotBar className="w-[3px] ml-[2px] mt-2 mb-[2px]" />
      <div className="flex-1 flex flex-col ml-[6px]">
        <div className="flex gap-[2px] h-[33px] pt-2 pl-px text-xs text-[#d0d0d0]">
          <button className="w-[18px] h-5 rounded bg-[#646464] font-mono leading-5">&lt;</button>
          <button className="w-[154px] h-5 rounded bg-[#646464]">0 / 100</button>
          <button className="w-[18px] h-5 rounded bg-[#646464] font-mono leading-5">&gt;</button>
        </div>
        <div className="flex flex-1 border-t border-black">
          <div className="w-[62px] pt-[7px] pl-[17px]">
            <svg viewBox="0 0 18 14" className="w-[18px] h-[14px]">
              <path d="M0 1h4M0 4h4M0 7h4M0 10h4M0 13h4" stroke={ICON} />
              <path d="M6 8q2-9 5-4 2 8 4 8t3-6" fill="none" stroke={TEAL} strokeWidth="1.500" />
            </svg>
          </div>
          <div className="flex-1 mr-[62px] bg-[#2a2a2a] border-b border-[#3a3a3a]">
            <div className="relative flex justify-between h-[30px] px-[6px] border-b border-[#3d3d3d]">
              <div className="absolute left-[2px] top-px bottom-0 w-[10px] bg-[#8a8019] border-x border-[#6a6212]" />
              {Array.from({ length: 101 }, (_, i) => (
                <div key={i} className="relative w-px flex flex-col items-center">
                  <span className={`w-px ${i % 5 === 0 ? 'h-full bg-[#707070]' : 'h-3 bg-[#8a8a8a]'}`} />
                  {i % 5 === 0 && (
                    <span className={`absolute top-[14px] text-xs leading-4 ${i === 0 ? 'text-[#e8e060]' : 'text-[#b8b8b8]'}`}>{i}</span>
                  )}
                </div>
              ))}
            </div>
          </div>
        </div>
      </div>
    </div>
  );
}

function CoordInput({ axis, value }: { axis: string; value: string }) {
  return (
    <div className="flex items-center gap-1">
      <label htmlFor={`coord-${axis}`} className="w-3">{axis}:</label>
      <input id={`coord-${axis}`} defaultValue={value} className="w-[72px] h-[22px] px-[3px] bg-[#565656] border border-[#3c3c3c] text-[#8c8c8c] outline-none" />
    </div>
  );
}

function PlayIcon({ d, w = 'w-5', corner }: { d: string; w?: string; corner?: boolean }) {
  return (
    <button aria-label="Playback" className={`relative h-5 grid place-items-center ${w}`}>
      <svg viewBox="0 0 20 20" className="size-5"><path d={d} fill={ICON} /></svg>
      {corner && <Corner />}
    </button>
  );
}

function NavIcon({ kind, corner }: { kind: string; corner?: boolean }) {
  return (
    <button aria-label={kind} className="relative w-6 h-[22px] grid place-items-center">
      <svg viewBox="0 0 20 20" className="size-5">
        {kind === 'zoom' && <path d="M2 18l6-7" stroke={ICON} strokeWidth="3" />}
        {kind === 'zoom' && <circle cx="12" cy="7" r="6" fill="none" stroke={ICON} strokeWidth="2" />}
        {kind === 'zoomall' && (
          <g>
            <path d="M8 0h5v5H8zM14 0h6v5h-6zM14 6h6v7h-6z" fill={TEAL} />
            <circle cx="9" cy="10" r="4" fill="#444" stroke={ICON} strokeWidth="2" />
            <path d="M1 19l5-6" stroke={ICON} strokeWidth="2.500" />
          </g>
        )}
        {kind === 'extents' && (
          <g>
            <path d="M10 2l7 4v8l-7 4-7-4V6z" fill={TEAL} />
            <path d="M3 6l7 4 7-4M10 10v8" fill="none" stroke="#2a6a6a" />
            <path d="M0 4V1h4M16 1h4v3M0 16v3h4" fill="none" stroke={ICON} />
          </g>
        )}
        {kind === 'extall' && (
          <g>
            <path d="M11 3l4-3 5 3v9l-5 3-4-3z" fill={TEAL} />
            <path d="M15 4v11" stroke="#2a6a6a" />
            <path d="M1 11l4-3 3 3-3 3zM8 8l3-3v7zM5 16l4-3 4 3-4 3z" fill={ICON} />
          </g>
        )}
        {kind === 'region' && (
          <g>
            <path d="M1 1h18v17H1z" fill="none" stroke={ICON} strokeDasharray="3 2" strokeWidth="1.500" />
            <circle cx="11" cy="9" r="5" fill="#444" stroke={TEAL} strokeWidth="2" />
            <path d="M1 19l6-6" stroke={TEAL} strokeWidth="2.500" />
          </g>
        )}
        {kind === 'pan' && <path d="M6 19l-5-7q0-2 2-1l2 1V3q1-2 2 0v6h1V1q1-2 2 0v8h1V2q1-2 2 0v8h1V5q2-2 2 0v9l-3 5z" fill={ICON} />}
        {kind === 'orbit' && (
          <g>
            <circle cx="9" cy="8" r="7" fill={ICON} />
            <path d="M9 1v7H2q0-6 7-7z" fill={TEAL} />
            <path d="M18 2q0 9-14 15" fill="none" stroke="#444" strokeWidth="4" />
            <path d="M19 1q0 10-15 15M17 8Q14 15 4 19" fill="none" stroke={ICON} strokeWidth="1.500" />
          </g>
        )}
        {kind === 'max' && (
          <g>
            <path d="M1 1h18v18H1z" fill={ICON} />
            <path d="M1 9h9v10H1z" fill="#333" />
            <path d="M2 11h7v7H2z" fill={ICON} />
            <path d="M9 10l6-6m-5-1h6v6" fill="none" stroke="#333" strokeWidth="2" />
          </g>
        )}
      </svg>
      {corner && <Corner />}
    </button>
  );
}

function StatusBar() {
  return (
    <div className="flex h-[69px] shrink-0 text-xs text-white">
      <div className="flex flex-col gap-[2px] w-[121px] ml-[5px] mt-[6px] shrink-0">
        <div className="h-7 bg-[#dcc4c6] border-2 border-white border-t-[#8a8a8a] border-l-[#8a8a8a]" />
        <input aria-label="MAXScript listener" placeholder="MAXScript Mini" className="h-7 bg-white border-2 border-white border-t-[#8a8a8a] border-l-[#8a8a8a] px-[3px] pb-[5px] text-[13px] placeholder-[#7a7a7a] font-['DejaVu_Sans_Mono',monospace]" />
      </div>
      <Sep className="h-[62px] mt-1 ml-1" />
      <div className="flex flex-col ml-[5px] pt-[11px] w-[680px] shrink-0">
        <span className="h-[31px] leading-[22px]">1 Object Selected</span>
        <span className="h-[30px] leading-[22px]">Click and drag to begin creation process</span>
      </div>
      <div className="flex flex-col pt-[10px]">
        <div className="flex items-center h-[23px]">
          <svg viewBox="0 0 19 19" className="size-[19px]">
            <path d="M5 5h9v9H5z" fill={TEAL} />
            <path d="M1 5V1h4M14 1h4v4M18 14v4h-4M5 18H1v-4" fill="none" stroke={ICON} />
          </svg>
          <svg viewBox="0 0 14 20" className="w-[14px] h-5 ml-4">
            <path d="M3 9V5q0-4 4-4t4 4v4" fill="none" stroke="#2b2b2b" strokeWidth="2" />
            <path d="M1 9h12v10H1z" fill="#565656" stroke="#2b2b2b" />
            <path d="M7 12v4" stroke="#222" strokeWidth="3" />
          </svg>
          <svg viewBox="0 0 18 18" className="size-[18px] ml-4">
            <path d="M1 1h16v16H1z" fill="none" stroke={ICON} strokeWidth="2" />
            <path d="M9 1v16M1 9h16" stroke={ICON} strokeWidth="2" />
            <path d="M9 4l5 5-5 5-5-5z" fill={ICON} />
            <circle cx="9" cy="9" r="2" fill="#333" />
          </svg>
          <div className="flex gap-[15px] ml-[10px]">
            <CoordInput axis="X" value="80.853" />
            <CoordInput axis="Y" value="-12.623" />
            <CoordInput axis="Z" value="0.0" />
          </div>
          <span className="ml-[17px]">Grid = 10.0</span>
        </div>
        <div className="flex items-center h-7 mt-[5px] ml-[227px]">
          <Sep className="h-[22px]" />
          <button aria-label="Security" className="ml-[6px] grid place-items-center w-6 h-[26px] rounded bg-[#5e5e5e]">
            <svg viewBox="0 0 14 16" className="w-[14px] h-4">
              <path d="M7 1q3 2 6 2 0 9-6 12Q1 12 1 3q3 0 6-2z" fill={ICON} />
              <path d="M7 2v6H2V4q3 0 5-2zM7 8h5q-1 4-5 6z" fill="#555" />
            </svg>
          </button>
          <span className="ml-[6px]">Enabled:</span>
          <span className="ml-[7px] size-[11px] rounded-full bg-[#4fd83f]" />
          <button className="ml-[7px] grid place-items-center w-6 h-[26px] rounded bg-[#5e5e5e]">
            <span className="size-4 rounded-full bg-[#e8e8e8] text-[#444] font-bold leading-4">1</span>
          </button>
          <Sep className="h-[22px] ml-[6px]" />
          <svg viewBox="0 0 14 16" className="w-[14px] h-4 ml-[10px]">
            <path d="M7 1l6 3v7l-6 4-6-4V4zM1 4l6 4 6-4M7 8v7" fill="none" stroke={ICON} />
          </svg>
          <span className="ml-[13px] text-[#d0d0d0]">Add Time Tag</span>
        </div>
      </div>
      <div className="flex ml-auto pr-3 shrink-0">
        <div className="flex flex-col pt-[10px] w-[138px]">
          <div className="flex items-center h-5 gap-1">
            <PlayIcon d="M1 3h2v14H1zM11 4v12L4 10zM19 4v12l-7-6z" />
            <Sep />
            <PlayIcon d="M10 3v14L1 10zM11 3h3v14h-3zM16 3h3v14h-3z" />
            <PlayIcon d="M3 1l14 9-14 9z" w="w-7" corner />
            <PlayIcon d="M2 3h3v14H2zM7 3h3v14H7zM11 3l9 7-9 7z" />
            <Sep />
            <PlayIcon d="M1 4v12l7-6zM9 4v12l7-6zM17 3h2v14h-2z" />
          </div>
          <div className="flex items-center h-6 mt-[5px] gap-[2px]">
            <PlayIcon d="M8 4v10L2 9zM12 4v10l6-5z" w="w-[22px]" />
            <Sep />
            <Spin id="Frame" value="0" className="w-[86px]" />
            <Sep />
            <svg viewBox="0 0 20 22" className="w-5 h-[22px] ml-[2px] shrink-0">
              <circle cx="8" cy="8" r="8" fill={ICON} />
              <path d="M8 3v5h4" fill="none" stroke="#444" strokeWidth="1.500" />
              <circle cx="14" cy="15" r="6" fill="#444" />
              <Gear x={14} y={15} r={6} fill="#fbab18" />
            </svg>
          </div>
        </div>
        <button aria-label="Set keys" className="ml-5 mt-2 grid place-items-center w-[54px] h-[54px] rounded bg-[#646464]">
          <svg viewBox="0 0 36 36" className="size-9">
            <path d="M12 1h7v11h14v7H19v12h-7V19H2v-7h10z" fill={ICON} stroke="#333" />
            <g stroke="#444" strokeWidth="4" fill="none"><circle cx="21" cy="30" r="4" /><path d="M24 27l10-9" /></g>
            <g stroke={TEAL} strokeWidth="2.500" fill="none"><circle cx="21" cy="30" r="4" /><path d="M24 27l10-9m-3 3l3 3m-6 0l3 3" /></g>
          </svg>
        </button>
        <div className="flex flex-col gap-[2px] ml-[4px] mt-2 text-[#d8d8d8]">
          <button className="w-[58px] h-[26px] rounded bg-[#646464]">Auto</button>
          <button className="w-[58px] h-[26px] rounded bg-[#646464]">Set K.</button>
        </div>
        <div className="flex flex-col ml-[5px] mt-2 w-[143px]">
          <Select label="Key set" value="Selected" className="h-[22px] bg-[#646464]" />
          <div className="flex items-center gap-[5px] mt-[6px]">
            <button aria-label="Tangents" className="relative w-6 h-[26px] grid place-items-center">
              <svg viewBox="0 0 22 22" className="size-[22px]">
                <path d="M2 21q5-4 5-14M19 21q-5-4-5-14" fill="none" stroke={TEAL} strokeWidth="2" />
                <path d="M2 4h17" stroke={ICON} />
                <circle cx="2" cy="4" r="2" fill={ICON} />
                <circle cx="19" cy="4" r="2" fill={ICON} />
                <path d="M8 2h5v5H8z" fill="#444" stroke={ICON} />
              </svg>
              <Corner />
            </button>
            <button className="flex-1 h-[26px] mr-[2px] rounded bg-[#646464] text-[#d8d8d8]">Filters...</button>
          </div>
        </div>
        <div className="grid grid-cols-4 gap-x-1 gap-y-[6px] content-start ml-3 mt-[9px] mr-[4px]">
          <NavIcon kind="zoom" />
          <NavIcon kind="zoomall" />
          <NavIcon kind="extents" corner />
          <NavIcon kind="extall" corner />
          <NavIcon kind="region" />
          <NavIcon kind="pan" corner />
          <NavIcon kind="orbit" corner />
          <NavIcon kind="max" />
        </div>
      </div>
    </div>
  );
}

/* ---------- floating windows ---------- */

function SlateIcon({ kind, corner, active }: { kind: string; corner?: boolean; active?: boolean }) {
  return (
    <button aria-label={kind} className={`relative grid place-items-center w-7 h-[26px] rounded-[3px] ${active ? 'bg-[#5d89c3]' : ''}`}>
      <svg viewBox="0 0 20 20" className="size-5">
        {kind === 'sphere' && <circle cx="10" cy="10" r="8.500" fill={ICON} />}
        {kind === 'backlight' && (
          <g stroke="#333">
            <path d="M15 1q5 0 5 5 0 2-2 4v4h-5v-4q-2-2-2-4 0-5 4-5z" fill={TEAL} />
            <circle cx="7" cy="14" r="6" fill={ICON} />
          </g>
        )}
        {kind === 'background' && (
          <g>
            <path d="M1 1h18v18H1z" fill={TEAL} />
            <circle cx="10" cy="10" r="8.500" fill="#222" />
            <Checker x={3} y={3} s={14} a="#222" b="#e0e0e0" />
          </g>
        )}
        {kind === 'tiling' && <path d="M1 1h18v18H1z" fill={ICON} />}
        {kind === 'color' && (
          <g>
            <path d="M1 1h3v13H1z" fill="#2fae3c" />
            <path d="M6 1h3v13H6z" fill="#f8a800" />
            <path d="M11 1h3v13h-3z" fill="#00b4f0" />
            <path d="M16 1h3v13h-3z" fill="#ee1c24" />
            <path d="M5 16h5v3H5z" fill="#666" />
            <path d="M10 16h5v3h-5z" fill="#999" />
            <path d="M15 16h4v3h-4z" fill="#ccc" />
          </g>
        )}
        {kind === 'preview' && (
          <g>
            <path d="M1 1h18v18H1z" fill={ICON} />
            <path d="M2 3h16M2 17h16" stroke="#333" strokeDasharray="1 2" />
            <path d="M3 5.500h14v9H3zM8 5v10M13 5v10" fill="none" stroke="#444" />
            <path d="M14 9v11M9 14.500h10" stroke="#444" strokeWidth="4" />
            <path d="M14 9v11M9 14.500h10" stroke="#fbab18" strokeWidth="2.500" />
          </g>
        )}
        {kind === 'options' && (
          <g>
            <Checker x={1} y={1} s={13} a="#2b2b2b" b="#e0e0e0" />
            <Gear x={15} y={15} r={5} fill="#fbab18" />
          </g>
        )}
        {kind === 'select' && (
          <g>
            <Checker x={1} y={1} s={14} a="#1e1e1e" b="#505050" />
            <path d="M13 9l6 8-3 0 1 3-2 0-1-3-2 1z" fill="#444" stroke="#222" />
          </g>
        )}
        {kind === 'navigator' && (
          <g>
            <Checker x={1} y={2} s={6} a="#2b2b2b" b="#e0e0e0" />
            <Checker x={1} y={12} s={6} a="#2b2b2b" b="#e0e0e0" />
            <path d="M10 5h9M10 15h9" stroke={ICON} strokeWidth="2" />
          </g>
        )}
      </svg>
      {corner && <Corner />}
    </button>
  );
}

function MaterialEditor() {
  return (
    <section className="absolute left-[537px] top-[51px] w-[480px] h-[872px] flex flex-col bg-[#444] border-r border-[#5a5a5a] shadow-[0_2px_8px_rgba(0,0,0,0.5)]">
      <div className="h-[62px] shrink-0 bg-white border-b-2 border-[#eee] flex justify-end pt-3 pr-6">
        <svg viewBox="0 0 12 12" className="size-3"><path d="M0 0l12 12M12 0L0 12" stroke="#999" /></svg>
      </div>
      <div className="flex flex-col items-end gap-1 pt-[5px] pr-[5px]">
        <SlateIcon kind="sphere" corner />
        <SlateIcon kind="backlight" active />
        <SlateIcon kind="background" />
        <SlateIcon kind="tiling" corner />
        <SlateIcon kind="color" />
        <SlateIcon kind="preview" corner />
        <SlateIcon kind="options" />
        <SlateIcon kind="select" />
        <SlateIcon kind="navigator" />
      </div>
      <div className="flex justify-end mt-12 pr-[17px]">
        <button className="h-[22px] px-[6px] rounded bg-[#646464] text-xs text-[#d8d8d8]">Standard (Legacy)</button>
      </div>
      <div className="flex flex-1 min-h-0 mt-[9px] pl-[3px] pr-[2px] pb-1 gap-1">
        <div className="flex-1 flex flex-col gap-1">
          <Rollout title="Shader Basic Parameters" className="h-20" />
          <Rollout title="Blinn Basic Parameters" className="h-[259px]" />
          <Rollout title="Extended Parameters" closed />
          <Rollout title="SuperSampling" closed />
          <Rollout title="Maps" closed />
        </div>
        <div className="w-2 rounded-full bg-[#3a3a3a]" />
      </div>
    </section>
  );
}

const places = [
  ['star', 'Quick access'],
  ['desktop', 'Desktop'],
  ['lib', 'Libraries'],
  ['pc', 'This PC'],
  ['net', 'Network'],
];

const libraries = [
  ['doc', 'Documents'],
  ['video', 'Videos'],
  ['pic', 'Pictures'],
  ['music', 'Music'],
  ['pic', 'Saved Pictures'],
  ['pic', 'Camera Roll'],
];

function PushButton({ children, className = '', disabled }: { children: React.ReactNode; className?: string; disabled?: boolean }) {
  return (
    <button
      disabled={disabled}
      className={`rounded border border-[#3e3e3e] text-xs ${disabled ? 'bg-[#565656] text-[#8c8c8c]' : 'bg-[#646464] text-[#dcdcdc]'} ${className}`}
    >
      {children}
    </button>
  );
}

function BitmapDialog() {
  return (
    <section
      role="dialog"
      aria-label="Select Bitmap Image File"
      className="absolute left-[47px] top-[45px] w-[932px] h-[794px] flex flex-col bg-[#444] text-xs text-white shadow-[0_3px_14px_rgba(0,0,0,0.6)]"
    >
      <div className="flex items-center h-[37px] shrink-0 bg-white pl-[9px] pr-[15px] pb-[2px] text-black">
        <MaxIcon className="size-5" />
        <span className="ml-[5px] text-[15px] font-['Open_Sans',sans-serif]">Select Bitmap Image File</span>
        <button aria-label="Close" className="ml-auto">
          <svg viewBox="0 0 12 12" className="size-3"><path d="M0 0l12 12M12 0L0 12" stroke="#000" /></svg>
        </button>
      </div>

      <div className="flex items-center mt-[11px] pr-[26px]">
        <label htmlFor="history" className="w-[133px] pt-1 text-right">History:</label>
        <Select
          id="history"
          label="History"
          value="C:\Users\User\OneDrive\문서\3ds Max 2022\sceneassets\images"
          className="ml-[13px] flex-1 h-[23px] bg-[#646464] border border-[#3c3c3c]"
        />
      </div>

      <div className="flex items-center mt-[15px]">
        <label htmlFor="lookin" className="w-[135px] pt-1 text-right">Look <u>i</u>n:</label>
        <div className="flex items-center ml-[11px] w-[348px] h-[25px] bg-white border border-[#3c3c3c] pl-1">
          <LibraryFolder className="w-[18px] h-4" />
          <select id="lookin" className="appearance-none flex-1 h-full pl-[5px] bg-white text-xs text-black outline-none">
            <option>Libraries</option>
          </select>
          <span className="grid place-items-center w-[27px] h-full bg-[#646464]"><Caret /></span>
        </div>
        <button aria-label="Back" className="ml-[24px]">
          <svg viewBox="0 0 12 12" className="size-3"><path d="M0 6l6-6v3h5v6H6v3z" fill={ICON} /></svg>
        </button>
        <button aria-label="Up one level" className="ml-[10px]">
          <svg viewBox="0 0 20 20" className="size-5">
            <path d="M1 2h6l2 2h10v15H1z" fill="#f3e24c" stroke="#c8a000" />
            <path d="M3 6h16v13H1z" fill="#fff685" />
            <path d="M7 13q7 2 7-7h-3l3-5 5 6h-2q0 10-9 8z" fill="#36a820" stroke="#1d7010" strokeWidth=".8" />
          </svg>
        </button>
        <button aria-label="New folder" className="ml-[7px]">
          <svg viewBox="0 0 20 20" className="size-5">
            <path d="M1 2h6l2 2h9v14H1z" fill="#d8d8d8" stroke="#999" />
            <path d="M3 8h16v11H1z" fill="#f4f4f4" stroke="#aaa" />
            <path d="M13 9v9M8.500 13.500h9" stroke="#333" strokeWidth="3" />
          </svg>
        </button>
        <button aria-label="View menu" className="ml-[7px] flex items-center gap-[2px]">
          <svg viewBox="0 0 20 19" className="w-5 h-[19px]">
            <path d="M.5.5h19v18H.5z" fill="#fff" stroke="#0a4fae" />
            <path d="M1 1h18v5H1z" fill="#0b6fd8" />
            <path d="M3 3h3M7 3h3M11 3h3" stroke="#063a80" strokeWidth="2" />
            <path d="M4 9h2v2H4zM9 9h2v2H9z" fill="#7070c0" />
            <path d="M9 13h2v3H9z" fill="#20209a" />
            <path d="M4 13h2v3H4z" fill="#ff5a10" />
          </svg>
          <Caret className="text-black" />
        </button>
      </div>

      <div className="flex mt-[10px] pl-[22px] pr-[26px]">
        <nav className="flex flex-col w-[116px] h-[417px] bg-[#f3f3f3] px-[2px] text-[14px] text-black font-['Open_Sans',sans-serif]">
          {places.map(([kind, label]) => (
            <button
              key={kind}
              className={`flex flex-col items-center justify-center gap-1 h-[73px] pt-[2px] ${
                kind === 'lib' ? 'border border-[#7c7c7c] bg-linear-to-b from-[#c4c4c4] to-[#e6e6e6]' : ''
              }`}
            >
              <PlaceIcon kind={kind} />
              <span className="leading-5">{label}</span>
            </button>
          ))}
        </nav>

        <div className="flex-1 flex flex-col ml-2">
          <div className="h-[349px] bg-white pt-[12px] pl-[9px]">
            <div className="grid grid-cols-[275px_275px] auto-rows-[66px]">
              {libraries.map(([kind, label]) => (
                <button key={label} className="flex items-start gap-2 text-left font-['Open_Sans',sans-serif] text-[14px] leading-5">
                  <PlateIcon kind={kind} />
                  <span className="pt-[7px]">
                    <span className="block text-black">{label}</span>
                    <span className="block text-[#888]">Library</span>
                  </span>
                </button>
              ))}
            </div>
          </div>

          <div className="flex items-start mt-[12px] pl-[2px]">
            <div className="grid grid-cols-[126px_482px] gap-y-[9px] items-center">
              <label htmlFor="filename" className="pt-1">File <u>n</u>ame:</label>
              <div className="flex items-center h-6 bg-[#646464] border border-[#3c3c3c] pl-1 pr-2">
                <span className="w-px h-4 bg-[#a8a8a8]" />
                <input id="filename" className="flex-1 bg-transparent outline-none" />
                <Caret />
              </div>
              <label htmlFor="filetype">Files of <u>t</u>ype:</label>
              <Select id="filetype" label="Files of type" value="All Formats" className="h-6 bg-[#646464] border border-[#3c3c3c]" />
              <label htmlFor="template">Name template:</label>
              <Select id="template" label="Name template" value="" className="h-6 bg-[#585858] border border-[#3c3c3c]" caret="text-[#8c8c8c]" />
            </div>
            <PushButton disabled className="ml-[11px] w-[29px] h-6">+</PushButton>
            <div className="ml-auto flex flex-col gap-1">
              <PushButton className="w-[99px] h-7"><u>O</u>pen</PushButton>
              <PushButton className="w-[99px] h-7">Cancel</PushButton>
            </div>
          </div>
        </div>
      </div>

      <div className="flex mt-[18px] pl-[14px]">
        <div className="flex flex-col w-[100px] mt-[3px]">
          <PushButton className="h-[28px]">Devices...</PushButton>
          <PushButton disabled className="h-[28px] mt-3">Setup...</PushButton>
          <PushButton disabled className="h-[28px] mt-2">Info...</PushButton>
          <PushButton disabled className="h-[28px] mt-1">View</PushButton>
        </div>
        <div className="ml-[10px] w-[242px]">
          <fieldset className="h-[96px] border border-b-0 border-[#383838] rounded-t pl-4 pt-[14px]">
            <legend className="-ml-2 px-1 leading-4">Gamma</legend>
            <Radio name="gamma" id="gamma-auto" checked label="Automatic (Recommended)" />
            <div className="flex items-center mt-[6px]">
              <Radio name="gamma" id="gamma-override" label="Override" />
              <Spin id="Gamma value" value="1.0" dim className="w-[91px] ml-[24px]" />
            </div>
          </fieldset>
          <div className="flex items-center h-[41px] mt-[6px] pl-4 border border-[#383838] rounded">
            <label className="flex items-center gap-[6px] w-[128px] text-[#8c8c8c]">
              <input type="checkbox" disabled className="appearance-none size-[15px] bg-[#585858] border border-[#4a4a4a]" />
              Sequence
            </label>
            <label className="flex items-center gap-[6px]">
              <span className="relative size-[15px]">
                <input type="checkbox" defaultChecked className="appearance-none block size-[15px] bg-[#646464] border border-[#3a3a3a]" />
                <svg viewBox="0 0 15 15" className="absolute inset-0 size-[15px] pointer-events-none">
                  <path d="M3 7l3 4 6-8" fill="none" stroke="#e0e0e0" strokeWidth="2" />
                </svg>
              </span>
              Preview
            </label>
          </div>
        </div>
        <div className="ml-[14px] mt-[3px] w-[196px] h-[138px] grid place-items-center border border-white border-t-[#aaa] border-l-[#aaa]">IMAGE</div>
      </div>

      <dl className="grid grid-cols-[86px_1fr] pl-[14px] mt-[9px] leading-[22px]">
        <dt>Statistics:</dt>
        <dd>N/A</dd>
        <dt>Location:</dt>
        <dd>N/A</dd>
      </dl>
      <svg viewBox="0 0 8 8" className="absolute right-0 bottom-0 size-2">
        <path d="M6 0h1v1H6zM3 3h1v1H3zM6 3h1v1H6zM0 6h1v1H0zM3 6h1v1H3zM6 6h1v1H6z" fill="#111" />
      </svg>
    </section>
  );
}

/* ---------- taskbar ---------- */

function AppIcon({ kind }: { kind: string }) {
  if (kind === 'max') return <MaxIcon className="size-[30px]" />;
  if (kind === 'folder') return <LibraryFolder className="w-7 h-7" />;
  return (
    <svg viewBox="0 0 30 30" className="size-[30px]">
      {kind === 'edge' && (
        <g>
          <circle cx="15" cy="15" r="15" fill="#1272c8" />
          <path d="M1 12Q4 0 15 0q13 1 15 12 0 8-9 8-5-1-4-3 3-8-7-9-6 0-9 4z" fill="#3fc9c0" />
          <path d="M22 2q8 5 8 11-1 7-9 7-5-1-4-3 3-1 3-4 3-5 2-11z" fill="#62d865" />
          <path d="M10 13q-2 9 6 13 6 2 11-2-6 8-15 5-9-5-7-12 2-5 8-6z" fill="#0b4fa0" />
          <path d="M30 18q-3 5-9 4-6-1-5-5-3 4 0 8 5 4 11-1 3-3 3-6z" fill="#1a1b29" />
        </g>
      )}
      {kind === 'chrome' && (
        <g>
          <circle cx="14" cy="14" r="14" fill="#fbbc05" />
          <path d="M14 0q9 0 12.500 7.500H14a7 7 0 0 0-6 4L3 6Q8 0 14 0z" fill="#ea4335" />
          <path d="M2 6l6 11q3 4 7 4l-4 7Q1 25 0 14q0-4 2-8z" fill="#34a853" />
          <circle cx="14" cy="14" r="6.500" fill="#fff" />
          <circle cx="14" cy="14" r="5" fill="#4285f4" />
          <circle cx="22" cy="22" r="8" fill="#8b2fb0" />
          <circle cx="22" cy="19" r="3" fill="#e6c8f0" />
          <path d="M16 27q1-4 6-4t6 4q-6 5-12 0z" fill="#e6c8f0" />
        </g>
      )}
      {kind === 'mail' && (
        <g>
          <path d="M0 10L15 0l15 10v19H0z" fill="#1276cc" />
          <path d="M3 10h24L15 20z" fill="#f2f2f2" />
          <path d="M0 10l15 10L0 29z" fill="#2a9be8" />
          <path d="M30 10L15 20l15 9zM15 18l15 11H0z" fill="#38bdf2" />
        </g>
      )}
      {kind === 'search' && (
        <g>
          <rect width="30" height="30" rx="12" fill="#1f4fd0" />
          <path d="M17 20a7 7 0 1 1 1-12M17 18l5 6" fill="none" stroke="#e8f0ff" strokeWidth="2.500" />
          <path d="M13 10h12M14 13h10M15 16h6" stroke="#bfe0ff" strokeWidth="1.500" />
        </g>
      )}
      {kind === 'arrow' && (
        <g>
          <rect width="30" height="30" rx="12" fill="#6a55e0" />
          <path d="M6 12a10 10 0 0 1 18-2M24 18a10 10 0 0 1-18 2M6 13v4M24 13v4" fill="none" stroke="#b8b0ff" strokeWidth="2" />
          <path d="M9 15h11m-4-4l4 4-4 4" fill="none" stroke="#fff" strokeWidth="2.500" />
        </g>
      )}
      {kind === 'ie' && (
        <g>
          <path d="M26 20q-4 8-12 7-10-2-9-12 1-9 11-9 10 1 10 11H11q1 5 5 5 3 0 4-2zM11 13h9q-1-4-4-4-4 0-5 4z" fill="#4bc8f5" />
          <path d="M27 8q3-8-5-6Q12 5 4 17q-6 11 0 11 3 0 6-2" fill="none" stroke="#f3c32a" strokeWidth="2.200" />
        </g>
      )}
      {kind === 'office' && (
        <g>
          <path d="M4 7L18 1l8 3v22l-8 4L4 24l14 1V6L9 9v12l-5 2z" fill="#d83b10" />
          <path d="M4 7l5-2v15l-5 3z" fill="#c01c3a" />
          <path d="M18 1l8 3v22l-8 4z" fill="#f0501a" />
        </g>
      )}
      {kind === 'android' && (
        <g>
          <circle cx="15" cy="15" r="14.500" fill="#fff" />
          <path d="M9 11q1-5 6-5t6 5z" fill="#3ddc84" />
          <path d="M8 11h13v12H8z" fill="#4285f4" />
          <path d="M12 23l4-10 4 10M23 13v10" fill="none" stroke="#1a2a50" strokeWidth="1.800" />
        </g>
      )}
      {kind === 'calendar' && (
        <g>
          <path d="M2 3h26v26H2z" fill="#1e9be8" />
          <path d="M2 3h26v7H2z" fill="#0d5fb0" />
          <path d="M7 0v6M23 0v6" stroke="#49c8ff" strokeWidth="3" />
          <path d="M11 14h13M6 19h18M6 24h13" stroke="#fff" strokeWidth="3" strokeDasharray="3 2" />
        </g>
      )}
      {kind === 'talk' && (
        <g>
          <rect width="30" height="30" rx="1" fill="#fae100" />
          <ellipse cx="15" cy="14" rx="12" ry="10" fill="#3a1d1d" />
          <path d="M8 20v6l6-4z" fill="#3a1d1d" />
          <text x="15" y="17" fontSize="8" fontWeight="700" textAnchor="middle" fill="#fae100">TALK</text>
        </g>
      )}
      {kind === 'sticky' && (
        <g>
          <path d="M2 1h26v27H2z" fill="#fdd40a" />
          <path d="M15 28V15h13z" fill="#222" />
          <path d="M28 15L15 28h13z" fill="#e0a810" />
        </g>
      )}
    </svg>
  );
}

const apps = [
  ['edge', '', ''],
  ['chrome', '', 'border-[#76b9ed]'],
  ['folder', '', ''],
  ['mail', '', ''],
  ['search', '', ''],
  ['arrow', '', ''],
  ['ie', '', ''],
  ['office', '', ''],
  ['android', '', ''],
  ['calendar', '', ''],
  ['talk', 'bg-[#a5622c]', 'border-[#ff7a0a]'],
  ['sticky', '', 'border-[#76b9ed]'],
  ['max', 'bg-[#454a5c]', 'border-[#76b9ed]'],
];

function Taskbar() {
  return (
    <footer className="flex h-[50px] shrink-0 bg-linear-to-r from-[#191925] from-30% via-[#25414f] via-42% to-[#0e1c3a] to-65% text-white">
      <button aria-label="Start" className="w-[60px] grid place-items-center">
        <svg viewBox="0 0 20 20" className="size-5">
          <path d="M0 3l8-1v7H0zM9 2l11-2v9H9zM0 10h8v8l-8-1zM9 10h11v10L9 18z" fill="#fff" />
        </svg>
      </button>
      <label className="flex items-center w-[430px] h-[50px] shrink-0 bg-[#313131] border border-[#565656] pl-[14px]">
        <svg viewBox="0 0 20 22" className="w-5 h-[22px] shrink-0">
          <circle cx="12" cy="8" r="7" fill="none" stroke="#f0f0f0" strokeWidth="1.500" />
          <path d="M0 21l7-8" stroke="#f0f0f0" strokeWidth="1.500" />
        </svg>
        <input
          placeholder="검색하려면 여기에 입력하십시"
          className="flex-1 min-w-0 ml-[15px] bg-transparent text-[21px] placeholder-[#d0d0d0] outline-none font-['Noto_Sans_CJK_KR',sans-serif]"
        />
        <svg viewBox="0 0 100 48" className="w-[100px] h-12 shrink-0">
          <path d="M0 48Q12 18 45 17l55 6v25z" fill="#6db4f5" />
          <path d="M45 30q25-10 55 0v18H30z" fill="#2a62d8" />
          <path d="M8 15q-2-5 4-6 2-5 8-5 7 0 8 6 5 2 3 6-11 4-23-1z" fill="#b8d4e8" />
          <path d="M34 2l4 2 4-2-1 4 2 4-4-1-4 1 1-4z" fill="#e060f0" />
          <circle cx="53" cy="8" r="3" fill="#f8a818" />
          <circle cx="6" cy="28" r="3" fill="#2fc46c" />
          {[46, 50, 54, 58, 62, 66, 70, 74, 78, 82, 86, 90, 94, 98].map((x, i) => {
            const top = 19 - Math.round(i * 1.1) + ((i * 5) % 7);
            return (
              <g key={x}>
                <rect x={x} y={top} width="4" height={30 - top} fill={i % 2 ? '#a8805a' : '#7d5a3c'} />
                <ellipse cx={x + 2} cy={top} rx="2.500" ry="1.500" fill="#f0dcc4" />
              </g>
            );
          })}
          {[12, 22, 32, 42, 52, 64, 76, 88].map((x, i) => (
            <g key={x}>
              <path d={`M${x - 4} ${39 - (i % 3) * 3}h12v20h-12z`} fill={i % 2 ? '#b08a60' : '#93704c'} />
              <path d={`M${x - 4} ${39 - (i % 3) * 3}l3-3h6l3 3-3 2h-6z`} fill="#dcb88c" />
            </g>
          ))}
        </svg>
      </label>
      <button aria-label="Task view" className="w-[63px] shrink-0 grid place-items-center">
        <svg viewBox="0 0 20 20" className="size-5">
          <path d="M1 0v3h12V0M1 6h12v8H1zM1 20v-3h12v3M18 0v5M18 12v8" fill="none" stroke="#fff" strokeWidth="1.300" />
          <path d="M17 7h3v3h-3z" fill="#fff" />
        </svg>
      </button>
      {apps.map(([kind, bg, line]) => (
        <button key={kind} aria-label={kind} className={`w-[62px] shrink-0 grid place-items-center border-b-[3px] pt-[3px] ${bg} ${line || 'border-transparent'}`}>
          <AppIcon kind={kind} />
        </button>
      ))}
      <div className="flex-1 flex items-center justify-end bg-linear-to-r from-[#131d3a] via-[#2a2436] to-[#131b42]">
        <svg viewBox="0 0 30 30" className="size-[30px]">
          <path d="M4 18q-5-6 2-9 2-8 9-8 8 1 9 8 6 2 4 8-3 4-24 1z" fill="#b0cbec" />
          <path d="M12 8l3 7q-1 3-3 3t-3-3zM8 18l3 6q-1 3-3 3t-3-3zM19 16l4 8q-1 4-4 4t-4-4z" fill="#1f9be8" />
          <circle cx="25" cy="25" r="4.500" fill="#e81030" />
        </svg>
        <span className="ml-[10px] text-[17px] font-['Open_Sans',sans-serif]">24°C</span>
        <svg viewBox="0 0 16 9" className="w-4 h-[9px] ml-[21px]"><path d="M0 9l8-8 8 8" fill="none" stroke="#fff" strokeWidth="1.300" /></svg>
        <svg viewBox="0 0 20 16" className="w-5 h-4 ml-3">
          <path d="M0 5h3l5-4v14l-5-4H0zM11 5q2 3 0 6M14 3q4 5 0 10M17 1q5 7 0 14" fill="none" stroke="#fff" />
        </svg>
        <svg viewBox="0 0 14 20" className="w-[14px] h-5 ml-[14px]">
          <path d="M1 6h9v9H1zM10 9l3-2v8l-3-2M2 3q5-4 9 0M2 18q5 3 9 0" fill="none" stroke="#fff" />
        </svg>
        <svg viewBox="0 0 20 18" className="w-5 h-[18px] ml-3">
          <path d="M3 14q-5-4 1-7 2-6 8-5 5 1 5 6 4 5-2 6z" fill="#a8a8a8" />
          <circle cx="14" cy="12" r="6" fill="#e02020" />
          <path d="M12 10l4 4m0-4l-4 4" stroke="#fff" strokeWidth="1.500" />
        </svg>
        <svg viewBox="0 0 20 13" className="w-5 h-[13px] ml-[10px]">
          <path d="M.5.5h17v12H.5zM19 4v5" fill="none" stroke="#fff" />
          <path d="M2 2h9v9H2z" fill="#fff" />
        </svg>
        <svg viewBox="0 0 16 16" className="size-4 ml-3">
          <path d="M1 16Q1 1 16 1M5 16Q5 5 16 5M9 16q0-7 7-7" fill="none" stroke="#ddd" />
          <circle cx="14" cy="14" r="2" fill="#fff" />
        </svg>
        <span className="ml-3 text-[24px] font-['Open_Sans',sans-serif]">A</span>
        <div className="ml-[14px] w-[78px] text-center text-[15px] leading-[22px] font-['Open_Sans','Noto_Sans_CJK_KR',sans-serif] whitespace-nowrap">
          <div>오후 3:07</div>
          <div>2022-07-13</div>
        </div>
        <div className="relative ml-[21px] w-8 h-[30px] mr-5">
          <svg viewBox="0 0 32 32" className="w-8 h-[30px]">
            <path d="M0 1h20v17h-9l-5 5v-5H0z" fill="#fff" />
            <path d="M4 6h12M4 10h12M4 14h8" stroke="#202040" strokeWidth="1.500" />
          </svg>
          <span className="absolute left-[9px] top-[9px] size-[21px] rounded-full bg-[#2a2a34] border border-[#8a8a92] text-center text-sm leading-[19px] font-bold">5</span>
        </div>
      </div>
    </footer>
  );
}

export default function App() {
  return (
    <div className="relative flex flex-col h-screen overflow-hidden bg-[#444] font-['Noto_Sans','Noto_Sans_CJK_KR',sans-serif]">
      <TitleBar />
      <MenuBar />
      <MainToolbar />
      <RibbonRows />
      <div className="flex flex-1 min-h-0">
        <LeftStrip />
        <SceneExplorer />
        <Viewport />
        <CommandPanel />
      </div>
      <TimeSlider />
      <StatusBar />
      <Taskbar />
      <MaterialEditor />
      <BitmapDialog />
    </div>
  );
}
